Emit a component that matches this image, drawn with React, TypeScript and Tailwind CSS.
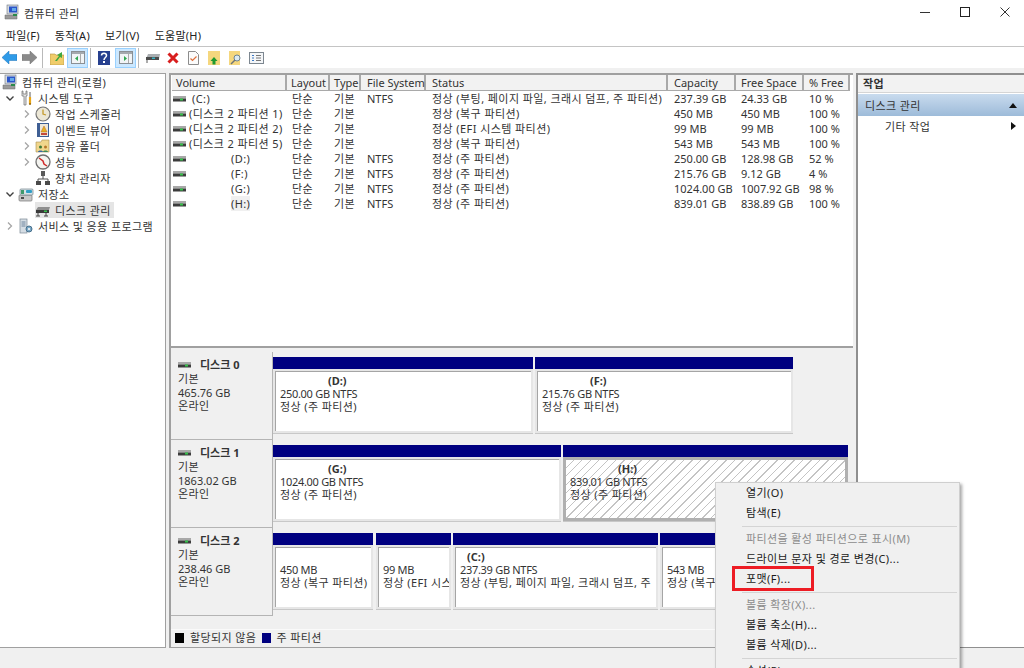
import React from "react";

type IconProps = { className?: string };

const DiskIcon = ({ className = "" }: IconProps) => (
  <svg className={className} width="13" height="6" viewBox="0 0 13 6">
    <rect x="0" y="0" width="13" height="2.5" fill="#a8a8a8" />
    <rect x="0" y="2.5" width="13" height="3" fill="#3c3c3c" />
    <rect x="7" y="2.5" width="3" height="2" fill="#35c24a" />
  </svg>
);

const ComputerIcon = () => (
  <svg width="16" height="16" viewBox="0 0 16 16">
    <path d="M1 11h12v4H1z" fill="#9a9a9a" stroke="#6a6a6a" strokeWidth=".5" />
    <rect x="3" y="1" width="11" height="9" fill="#d5d9de" stroke="#6f7780" strokeWidth=".6" />
    <rect x="5" y="2.5" width="8" height="6" fill="#2b55c8" />
    <rect x="8" y="4" width="4" height="3" fill="#63a8ea" />
    <rect x="9" y="10" width="4" height="2" fill="#2a8a4a" />
  </svg>
);

const ToolsIcon = () => (
  <svg width="16" height="16" viewBox="0 0 16 16">
    <path d="M4 1v5h2v9h2V6h1V1H8v3H5V1z" fill="#e4e4e4" stroke="#6d6d6d" strokeWidth=".7" />
    <path d="M12 2v5" stroke="#8a8a8a" strokeWidth="1.4" />
    <path d="M12 7v7" stroke="#e9a516" strokeWidth="2.2" />
    <path d="M11 14h2" stroke="#96660c" strokeWidth="1.4" />
  </svg>
);

const ClockIcon = () => (
  <svg width="16" height="16" viewBox="0 0 16 16">
    <circle cx="8" cy="8" r="7" fill="#ece7d6" stroke="#757575" strokeWidth="1.2" />
    <path d="M8 3.5V8l3 1" fill="none" stroke="#c49a2c" strokeWidth="1.3" />
  </svg>
);

const EventIcon = () => (
  <svg width="16" height="16" viewBox="0 0 16 16">
    <rect x="2" y="1" width="12" height="14" fill="#3f5f94" />
    <rect x="5" y="2" width="8" height="12" fill="#eee7d8" />
    <path d="M9 4l3 6H6z" fill="#e8b020" stroke="#b5651d" strokeWidth=".5" />
    <rect x="6" y="11" width="6" height="2" fill="#c44a3a" />
  </svg>
);

const ShareIcon = () => (
  <svg width="16" height="16" viewBox="0 0 16 16">
    <path d="M1 4h5l1-2h7v12H1z" fill="#f0d68c" stroke="#a88f50" strokeWidth=".6" />
    <circle cx="5.5" cy="9" r="1.5" fill="#3a7a3a" />
    <path d="M3 14c0-2 5-2 5 0z" fill="#3a6aa0" />
    <circle cx="10.5" cy="9" r="1.5" fill="#b5762a" />
    <path d="M8 14c0-2 5-2 5 0z" fill="#3a8a5a" />
  </svg>
);

const PerfIcon = () => (
  <svg width="16" height="16" viewBox="0 0 16 16">
    <circle cx="8" cy="8" r="7" fill="#f4f4f0" stroke="#6f6f6f" strokeWidth="1.3" />
    <path d="M4 4l4 3 1 3 3 2" fill="none" stroke="#cf2a2a" strokeWidth="1.5" />
  </svg>
);

const DeviceIcon = () => (
  <svg width="16" height="16" viewBox="0 0 16 16">
    <rect x="6" y="1" width="4" height="5" fill="#5a5a5a" />
    <path d="M8 6v3M3 9h10M3 9v2M13 9v2" stroke="#555" strokeWidth="1" fill="none" />
    <rect x="1" y="11" width="5" height="4" fill="#4a4a4a" />
    <rect x="10" y="11" width="5" height="4" fill="#4a4a4a" />
  </svg>
);

const StorageIcon = () => (
  <svg width="16" height="16" viewBox="0 0 16 16">
    <rect x="1" y="9" width="13" height="6" rx="1" fill="#c8c8c8" stroke="#777" strokeWidth=".7" />
    <rect x="3" y="11" width="3" height="2" fill="#4a4a4a" />
    <rect x="2" y="3" width="13" height="6" rx="1" fill="#d8e2e6" stroke="#71828a" strokeWidth=".7" />
    <rect x="8" y="4" width="6" height="3" rx="1" fill="#2f9ec6" />
    <rect x="3" y="4" width="3" height="4" fill="#3f9a6c" />
  </svg>
);

const DiskMgmtIcon = () => (
  <svg width="16" height="16" viewBox="0 0 16 16">
    <path d="M3 5h12l-1 3H1z" fill="#8f8f8f" />
    <rect x="1" y="8" width="13" height="3" fill="#3a3a3a" />
    <rect x="9" y="8.5" width="3" height="1.5" fill="#37c24c" />
    <path d="M3 11v3M11 11v3M1 14h4M9 14h4" stroke="#444" strokeWidth="1" />
  </svg>
);

const ServiceIcon = () => (
  <svg width="16" height="16" viewBox="0 0 16 16">
    <rect x="2" y="1" width="7" height="14" fill="#d5dde4" stroke="#7b8894" strokeWidth=".7" />
    <path d="M3.5 4h4M3.5 6h4M3.5 8h4" stroke="#53708c" strokeWidth=".8" />
    <circle cx="11" cy="11" r="3" fill="#7aa7c6" stroke="#47708c" strokeWidth="1" />
    <circle cx="11" cy="11" r="1" fill="#fff" />
  </svg>
);

const Chevron = ({ open }: { open: boolean }) =>
  open ? (
    <svg width="10" height="10" viewBox="0 0 10 10">
      <path d="M1.5 3.5L5 7l3.5-3.5" fill="none" stroke="#404040" strokeWidth="1.4" />
    </svg>
  ) : (
    <svg width="10" height="10" viewBox="0 0 10 10">
      <path d="M3 1.5L6.5 5 3 8.5" fill="none" stroke="#a6a6a6" strokeWidth="1.3" />
    </svg>
  );

const PaneIcon = ({ flip = false }: { flip?: boolean }) => (
  <svg width="14" height="13" viewBox="0 0 14 13">
    <rect x=".5" y=".5" width="13" height="12" fill="#f1f4f6" stroke="#8a8f94" />
    <rect x="1" y="1" width="12" height="2" fill="#a4a9ae" />
    <path d="M9.5 3v9" stroke="#aaaaaa" />
    <path d={flip ? "M5 5v5l3-2.5z" : "M7 5v5L4 7.5z"} fill="#2fa84f" />
  </svg>
);

const Separator = () => <span className="h-[20px] w-px bg-[#b9b9b9]" />;

const Toolbar = () => (
  <div className="flex h-[21px] items-center bg-white pl-[2px]">
    <svg width="15" height="13" viewBox="0 0 15 13">
      <path d="M0 6.5L7 0v3.5h8v6H7V13z" fill="#2f9be8" stroke="#1b70b8" strokeWidth=".5" />
    </svg>
    <svg className="ml-[5px]" width="15" height="13" viewBox="0 0 15 13">
      <path d="M15 6.5L8 0v3.5H0v6h8V13z" fill="#8a8a8a" stroke="#6e6e6e" strokeWidth=".5" />
    </svg>
    <span className="ml-[5px] flex">
      <Separator />
    </span>
    <svg className="ml-[7px]" width="14" height="14" viewBox="0 0 14 14">
      <path d="M0 3h5l1 1h8v10H0z" fill="#f0cc6a" stroke="#b39043" strokeWidth=".6" />
      <path d="M5 10l4-5-2-1 5-3v6l-2-1-3 4z" fill="#3fa83f" />
    </svg>
    <span className="ml-[3px] flex h-[20px] w-[21px] items-center justify-center border border-[#99d1ff] bg-[#cce8ff]">
      <PaneIcon />
    </span>
    <span className="ml-[2px] flex">
      <Separator />
    </span>
    <svg className="ml-[7px]" width="12" height="14" viewBox="0 0 12 14">
      <rect width="12" height="14" fill="#27408f" />
      <path d="M3.5 4.5C3.5 1.5 8.500 1.500 8.500 4.500 8.500 6.500 6 6.500 6 9" fill="none" stroke="#fff" strokeWidth="1.5" />
      <rect x="5" y="10" width="2" height="2" fill="#fff" />
    </svg>
    <span className="ml-[5px] flex h-[20px] w-[21px] items-center justify-center border border-[#99d1ff] bg-[#cce8ff]">
      <PaneIcon flip />
    </span>
    <span className="ml-[2px] flex">
      <Separator />
    </span>
    <svg className="ml-[6px]" width="15" height="12" viewBox="0 0 15 12">
      <path d="M3 2h12l-1 5H1z" fill="#a9adb0" />
      <rect x="1" y="5" width="13" height="3" fill="#4b4b4b" />
      <rect x="7" y="5.500" width="3" height="1.500" fill="#38b6c8" />
      <path d="M2 8v3" stroke="#5a5a5a" />
    </svg>
    <svg className="ml-[7px]" width="12" height="12" viewBox="0 0 12 12">
      <path d="M1.500 1.500l9 9M10.500 1.500l-9 9" stroke="#d81e1e" strokeWidth="3" />
    </svg>
    <svg className="ml-[9px]" width="11" height="14" viewBox="0 0 11 14">
      <path d="M.5.500h7l3 3v10H.500z" fill="#fbfbfb" stroke="#8c8c8c" />
      <path d="M2.500 7.500l2 2 4-4" fill="none" stroke="#e0703c" strokeWidth="1.200" />
    </svg>
    <svg className="ml-[9px]" width="12" height="14" viewBox="0 0 12 14">
      <rect width="12" height="14" fill="#f5d77e" />
      <path d="M6 6l3.500 4H7.500v3.500h-3V10H2.500z" fill="#1f9a2f" />
    </svg>
    <svg className="ml-[9px]" width="13" height="14" viewBox="0 0 13 14">
      <rect width="11" height="14" fill="#f5d77e" />
      <circle cx="8" cy="7" r="3" fill="#dceaf2" stroke="#6d8494" />
      <path d="M6 9l-4 4" stroke="#6d7478" strokeWidth="1.500" />
    </svg>
    <svg className="ml-[7px]" width="15" height="12" viewBox="0 0 15 12">
      <rect x=".5" y=".5" width="14" height="11" fill="#f4f6f8" stroke="#7d8790" />
      <path d="M3 3.500h2M3 6h2M3 8.500h2" stroke="#3b78c4" strokeWidth="1.200" />
      <path d="M7 3.500h5M7 6h5M7 8.500h5" stroke="#777" />
    </svg>
  </div>
);

const treeRows = [
  { label: "컴퓨터 관리(로컬)", pad: "pl-[2px]", chevron: null, icon: <ComputerIcon />, root: true },
  { label: "시스템 도구", pad: "pl-[2px]", chevron: true, icon: <ToolsIcon /> },
  { label: "작업 스케줄러", pad: "pl-[19px]", chevron: false, icon: <ClockIcon /> },
  { label: "이벤트 뷰어", pad: "pl-[19px]", chevron: false, icon: <EventIcon /> },
  { label: "공유 폴더", pad: "pl-[19px]", chevron: false, icon: <ShareIcon /> },
  { label: "성능", pad: "pl-[19px]", chevron: false, icon: <PerfIcon /> },
  { label: "장치 관리자", pad: "pl-[19px]", chevron: null, icon: <DeviceIcon /> },
  { label: "저장소", pad: "pl-[2px]", chevron: true, icon: <StorageIcon /> },
  { label: "디스크 관리", pad: "pl-[19px]", chevron: null, icon: <DiskMgmtIcon />, selected: true },
  { label: "서비스 및 응용 프로그램", pad: "pl-[2px]", chevron: false, icon: <ServiceIcon /> },
];

const Tree = () => (
  <div className="w-[166px] shrink-0 border-t border-r border-b border-[#a0a0a0] bg-white tracking-[0.4px]">
    {treeRows.map((row) => (
      <div key={row.label} className={`flex h-4 items-center whitespace-nowrap ${row.pad}`}>
        {!row.root && (
          <span className="flex w-4 justify-center">
            {row.chevron !== null && <Chevron open={row.chevron} />}
          </span>
        )}
        <span className={`flex h-4 items-center gap-1 pr-[3px] ${row.selected ? "bg-[#e5e5e5]" : ""}`}>
          {row.icon}
          <span>{row.label}</span>
        </span>
      </div>
    ))}
  </div>
);

const columns = "grid grid-cols-[115px_43px_31px_65px_242px_68px_68px_46px]";

const headers = [
  ["Volume", "pl-[4px]"],
  ["Layout", "pl-[4px]"],
  ["Type", "pl-[4px]"],
  ["File System", "pl-[6px]"],
  ["Status", "pl-[6px]"],
  ["Capacity", "pl-[6px]"],
  ["Free Space", "pl-[5px]"],
  ["% Free", "pl-[5px]"],
];

const volumes = [
  ["pl-[6px]", "(C:)", "NTFS", "정상 (부팅, 페이지 파일, 크래시 덤프, 주 파티션)", "237.39 GB", "24.33 GB", "10 %"],
  ["pl-[3px]", "(디스크 2 파티션 1)", "", "정상 (복구 파티션)", "450 MB", "450 MB", "100 %"],
  ["pl-[3px]", "(디스크 2 파티션 2)", "", "정상 (EFI 시스템 파티션)", "99 MB", "99 MB", "100 %"],
  ["pl-[3px]", "(디스크 2 파티션 5)", "", "정상 (복구 파티션)", "543 MB", "543 MB", "100 %"],
  ["pl-[45px]", "(D:)", "NTFS", "정상 (주 파티션)", "250.00 GB", "128.98 GB", "52 %"],
  ["pl-[45px]", "(F:)", "NTFS", "정상 (주 파티션)", "215.76 GB", "9.12 GB", "4 %"],
  ["pl-[45px]", "(G:)", "NTFS", "정상 (주 파티션)", "1024.00 GB", "1007.92 GB", "98 %"],
  ["pl-[45px]", "(H:)", "NTFS", "정상 (주 파티션)", "839.01 GB", "838.89 GB", "100 %"],
];

const VolumeList = () => (
  <div className="h-[271px] bg-white pl-px">
    <div className={`${columns} h-[16px] items-center`}>
      {headers.map(([name, pad]) => (
        <div
          key={name}
          className={`flex h-[16px] items-center whitespace-nowrap border-r-2 border-b border-[#a9a9a9] bg-[#f2f2f2] ${pad}`}
        >
          {name}
        </div>
      ))}
    </div>
    <div>
      {volumes.map(([pad, name, fs, status, cap, free, pct]) => (
        <div key={name} className={`${columns} h-[15px] items-center whitespace-nowrap`}>
          <div className="flex items-center pl-[1px]">
            <DiskIcon />
            <span className={`${pad} tracking-[0.4px]`}>
              <span className={name === "(H:)" ? "bg-[#f0f0f0]" : ""}>{name}</span>
            </span>
          </div>
          <div className="pl-[5px] tracking-[0.4px]">단순</div>
          <div className="pl-[4px] tracking-[0.4px]">기본</div>
          <div className="pl-[6px]">{fs}</div>
          <div className="pl-[6px] tracking-[0.42px]">{status}</div>
          <div className="pl-[6px]">{cap}</div>
          <div className="pl-[5px]">{free}</div>
          <div className="pl-[5px]">{pct}</div>
        </div>
      ))}
    </div>
  </div>
);

type PartitionProps = {
  width: string;
  name?: string;
  nameIndent?: string;
  size: string;
  status: string;
  selected?: boolean;
};

const Partition = ({ width, name, nameIndent = "pl-[48px]", size, status, selected }: PartitionProps) => (
  <div className={`shrink-0 ${width}`}>
    <div className="h-[12px] bg-[#000080]" />
    <div className={`h-[65px] border-b border-[#c8c8c8] ${selected ? "bg-[#b0b0b0] p-[3px]" : "bg-[#e6e6e6] p-[2px]"}`}>
      <div
        className={`h-full overflow-hidden whitespace-nowrap pl-[4px] pt-[2px] leading-[13px] ${
          selected
            ? "bg-[repeating-linear-gradient(135deg,#ffffff_0px,#ffffff_5px,#c4c4c4_5px,#c4c4c4_6px)]"
            : "border-t border-l border-[#a5a5a5] bg-white"
        }`}
      >
        <div className={`h-[13px] font-bold ${nameIndent}`}>{name}</div>
        <div className="tracking-[-0.3px]">{size}</div>
        <div className="tracking-[0.4px]">{status}</div>
      </div>
    </div>
  </div>
);

const DiskLabel = ({ n, size }: { n: number; size: string }) => (
  <div className="h-[88px] w-[102px] shrink-0 border-r border-b border-[#b4b4b4] bg-[#f0f0f0] pl-[7px] pt-[6px] leading-[13.5px]">
    <div className="flex h-[14px] items-center font-bold">
      <DiskIcon />
      <span className="ml-[9px]">디스크 {n}</span>
    </div>
    <div className="tracking-[0.4px]">기본</div>
    <div>{size}</div>
    <div className="tracking-[0.4px]">온라인</div>
  </div>
);

const DiskGraph = () => (
  <div className="flex-1 border-t-2 border-[#a0a0a0] bg-[#f0f0f0] pt-[4px]">
    <div className="flex h-[88px]">
      <DiskLabel n={0} size="465.76 GB" />
      <div className="flex gap-[2px] pt-[5px]">
        <Partition width="w-[260px]" name="(D:)" size="250.00 GB NTFS" status="정상 (주 파티션)" />
        <Partition width="w-[258px]" name="(F:)" size="215.76 GB NTFS" status="정상 (주 파티션)" />
      </div>
    </div>
    <div className="flex h-[88px]">
      <DiskLabel n={1} size="1863.02 GB" />
      <div className="flex gap-[2px] pt-[5px]">
        <Partition width="w-[288px]" name="(G:)" size="1024.00 GB NTFS" status="정상 (주 파티션)" />
        <Partition width="w-[285px]" name="(H:)" size="839.01 GB NTFS" status="정상 (주 파티션)" selected />
      </div>
    </div>
    <div className="flex h-[88px]">
      <DiskLabel n={2} size="238.46 GB" />
      <div className="flex gap-[2px] pt-[5px]">
        <Partition width="w-[100px]" size="450 MB" status="정상 (복구 파티션)" />
        <Partition width="w-[75px] ml-px" size="99 MB" status="정상 (EFI 시스" />
        <Partition
          width="w-[205px]"
          name="(C:)"
          nameIndent="pl-[7px]"
          size="237.39 GB NTFS"
          status="정상 (부팅, 페이지 파일, 크래시 덤프, 주"
        />
        <Partition width="w-[188px]" size="543 MB" status="정상 (복구 파티션)" />
      </div>
    </div>
    <div className="mt-[13px] flex h-[16px] items-center border-t border-[#fafafa] pl-[4px] tracking-[0.4px]">
      <span className="h-[10px] w-[9px] bg-black" />
      <span className="ml-[6px]">할당되지 않음</span>
      <span className="ml-[6px] h-[10px] w-[9px] bg-[#000080]" />
      <span className="ml-[5px]">주 파티션</span>
    </div>
  </div>
);

const ActionPane = () => (
  <div className="ml-[3px] flex-1 border-t-2 border-l-2 border-b border-[#8f8f8f] bg-white tracking-[0.4px]">
    <div className="flex h-[18px] items-center border-b border-[#d5d5d5] bg-[#f2f2f2] pb-px pl-[5px] font-bold">작업</div>
    <div className="mt-px flex h-[22px] items-center justify-between bg-gradient-to-b from-[#c9dbee] to-[#9dbbd9] pl-[7px] pr-[7px]">
      <span>디스크 관리</span>
      <svg width="8" height="5" viewBox="0 0 8 5">
        <path d="M4 0l4 5H0z" fill="#111" />
      </svg>
    </div>
    <div className="flex h-[20px] items-center justify-between pl-[27px] pr-[8px]">
      <span>기타 작업</span>
      <svg width="5" height="8" viewBox="0 0 5 8">
        <path d="M0 0l5 4-5 4z" fill="#111" />
      </svg>
    </div>
  </div>
);

const MenuItem = ({ label, disabled }: { label: string; disabled?: boolean }) => (
  <div className={`flex h-5 items-center pb-[2px] pl-[30px] whitespace-nowrap ${disabled ? "text-[#8c8c8c]" : "text-[#1a1a1a]"}`}>
    {label}
  </div>
);

const MenuSep = () => <div className="my-[2.5px] ml-[26px] mr-[2px] h-px bg-[#d4d4d4]" />;

const ContextMenu = () => (
  <div className="absolute left-[715px] top-[482px] h-[200px] w-[245px] border border-[#cfcfcf] bg-[#f0f0f0] tracking-[0.4px] shadow-[2px_2px_3px_rgba(0,0,0,0.35)]">
    <MenuItem label="열기(O)" />
    <MenuItem label="탐색(E)" />
    <MenuSep />
    <MenuItem label="파티션을 활성 파티션으로 표시(M)" disabled />
    <MenuItem label="드라이브 문자 및 경로 변경(C)..." />
    <div className="relative">
      <MenuItem label="포맷(F)..." />
      <span className="absolute left-[16px] top-[-3px] h-[25px] w-[82px] border-[3px] border-[#ed1c24]" />
    </div>
    <MenuSep />
    <MenuItem label="볼륨 확장(X)..." disabled />
    <MenuItem label="볼륨 축소(H)..." />
    <MenuItem label="볼륨 삭제(D)..." />
    <MenuSep />
    <MenuItem label="속성(P)" />
  </div>
);

export default function App() {
  return (
    <div className="relative flex h-[668px] w-[1024px] flex-col overflow-hidden bg-[#f0f0f0] font-['Noto_Sans','Noto_Sans_CJK_KR',sans-serif] text-[11px] leading-none text-[#333]">
      {/* Title bar */}
      <div className="flex h-[24px] items-center bg-white pl-[4px]">
        <ComputerIcon />
        <span className="ml-[4px] pt-[3px] tracking-[0.4px]">컴퓨터 관리</span>
        <div className="ml-auto flex items-center">
          <span className="h-px w-[10px] bg-[#333]" />
          <span className="ml-[30px] h-[10px] w-[10px] border border-[#222]" />
          <svg className="ml-[30px] mr-[14px]" width="10" height="10" viewBox="0 0 10 10">
            <path d="M.5.500l9 9M9.500.500l-9 9" stroke="#333" />
          </svg>
        </div>
      </div>

      {/* Menu bar */}
      <div className="flex h-[23px] items-center gap-[15px] border-b border-[#c4c4c4] bg-white pl-[6px] pt-px tracking-[0.25px] text-[#222]">
        <span>파일(F)</span>
        <span>동작(A)</span>
        <span>보기(V)</span>
        <span>도움말(H)</span>
      </div>

      <Toolbar />

      {/* Panes */}
      <div className="mt-[5px] flex h-[575px]">
        <Tree />
        <div className="ml-[3px] flex w-[684px] shrink-0 flex-col border-t-2 border-l-2 border-b border-[#a0a0a0]">
          <VolumeList />
          <DiskGraph />
        </div>
        <ActionPane />
      </div>

      <ContextMenu />
    </div>
  );
}
